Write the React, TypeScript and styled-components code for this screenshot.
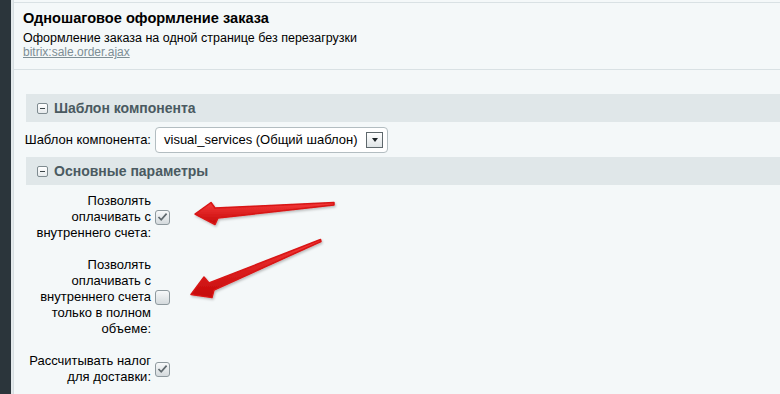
import React from "react";
import styled, { createGlobalStyle } from "styled-components";

const GlobalStyle = createGlobalStyle`
  html, body {
    margin: 0;
    padding: 0;
    background: #f4f8f9;
  }
  body {
    font-family: "Liberation Sans", Arial, sans-serif;
    color: #000;
  }
`;

type Field = {
  lines: string[];
  checked: boolean;
};

const fields: Field[] = [
  { lines: ["Позволять", "оплачивать с", "внутреннего счета:"], checked: true },
  {
    lines: ["Позволять", "оплачивать с", "внутреннего счета", "только в полном", "объеме:"],
    checked: false,
  },
  { lines: ["Рассчитывать налог", "для доставки:"], checked: true },
];

export default function App() {
  return (
    <Page>
      <GlobalStyle />
      <SideStrip />
      <Gutter />
      <Main>
        <Header>
          <Title>Одношаговое оформление заказа</Title>
          <Subtitle>Оформление заказа на одной странице без перезагрузки</Subtitle>
          <CodeLink href="#">bitrix:sale.order.ajax</CodeLink>
        </Header>

        <Body>
          <SectionBar>
            <Toggle />
            Шаблон компонента
          </SectionBar>
          <SelectRow>
            <Label $nowrap>Шаблон компонента:</Label>
            <Select>
              <SelectText>visual_services (Общий шаблон)</SelectText>
              <SelectButton>
                <Caret />
              </SelectButton>
            </Select>
          </SelectRow>

          <SectionBar>
            <Toggle />
            Основные параметры
          </SectionBar>
          {fields.map((f, i) => (
            <FieldRow key={i}>
              <Label>
                {f.lines.map((l, j) => (
                  <React.Fragment key={j}>
                    {l}
                    {j < f.lines.length - 1 && <br />}
                  </React.Fragment>
                ))}
              </Label>
              <CheckBox>
                {f.checked && (
                  <svg width="11" height="10" viewBox="0 0 11 10">
                    <path d="M1.5 5 L4.2 7.8 L9.6 1.6" fill="none" stroke="#5f696e" strokeWidth="1.7" />
                  </svg>
                )}
              </CheckBox>
            </FieldRow>
          ))}
        </Body>
      </Main>

      <Arrows width="780" height="394" viewBox="0 0 780 394">
        <defs>
          <linearGradient id="red" x1="0" y1="0" x2="0" y2="1">
            <stop offset="0" stopColor="#f43a3a" />
            <stop offset="1" stopColor="#c40808" />
          </linearGradient>
          <filter id="shade" x="-10%" y="-20%" width="120%" height="140%">
            <feDropShadow dx="1" dy="1.5" stdDeviation="1" floodColor="#000" floodOpacity="0.25" />
          </filter>
        </defs>
        <g fill="url(#red)" stroke="#d81414" strokeWidth="1.5" strokeLinejoin="round" filter="url(#shade)">
          <path d="M195 214 L211 202.5 L215 208 L334 202.5 L334 205 L218 218 L215 224.5 Z" />
          <path d="M191 294.5 L204 277 L209 283 L320.5 239.5 L321 241.5 L214 290 L212 297.5 Z" />
        </g>
      </Arrows>
    </Page>
  );
}

const Page = styled.div`
  position: relative;
  display: flex;
  width: 780px;
  height: 394px;
  overflow: hidden;
`;

const SideStrip = styled.div`
  width: 11px;
  flex-shrink: 0;
  background: #2b353b;
`;

const Gutter = styled.div`
  width: 2px;
  flex-shrink: 0;
  background: #e3e9eb;
`;

const Main = styled.div`
  flex: 1;
  border-left: 1px solid #d6dee1;
  background: #f4f8f9;
`;

const Header = styled.div`
  box-sizing: border-box;
  height: 68px;
  margin-top: 2px;
  padding: 6px 9px 0;
  border-top: 1px solid #d9e1e4;
  border-bottom: 1px solid #d9e1e4;
`;

const Title = styled.div`
  font-size: 14.6px;
  font-weight: bold;
  line-height: 18px;
  color: #000;
`;

const Subtitle = styled.div`
  margin-top: 4px;
  font-size: 12.5px;
  line-height: 14px;
  color: #000;
`;

const CodeLink = styled.a`
  display: block;
  font-size: 12px;
  line-height: 14px;
  color: #7d8e95;
  text-decoration: underline;
`;

const Body = styled.div`
  padding: 24px 0 0 12px;
`;

const SectionBar = styled.div`
  display: flex;
  align-items: center;
  gap: 6px;
  height: 28px;
  padding-left: 11px;
  background: #e0e7e9;
  font-size: 14px;
  font-weight: bold;
  color: #4a5a61;
`;

const Toggle = styled.span`
  position: relative;
  box-sizing: border-box;
  width: 11px;
  height: 11px;
  border: 1px solid #7f8b90;
  border-radius: 2px;
  background: linear-gradient(#ffffff, #e6eaec);

  &::after {
    content: "";
    position: absolute;
    left: 2px;
    right: 2px;
    top: 4px;
    height: 1px;
    background: #3c4649;
  }
`;

const Label = styled.div<{ $nowrap?: boolean }>`
  box-sizing: border-box;
  display: flex;
  justify-content: flex-end;
  width: 125px;
  flex-shrink: 0;
  text-align: right;
  white-space: ${(p) => (p.$nowrap ? "nowrap" : "normal")};
  font-size: 13px;
  line-height: 16px;
  color: #000;
`;

const SelectRow = styled.div`
  display: flex;
  align-items: center;
  gap: 4px;
  height: 35px;
`;

const Select = styled.div`
  box-sizing: border-box;
  display: flex;
  align-items: center;
  justify-content: space-between;
  width: 233px;
  height: 26px;
  padding: 0 4px 0 8px;
  border: 1px solid #b3bdc1;
  border-radius: 4px;
  background: #fff;
`;

const SelectText = styled.span`
  font-size: 13px;
  color: #000;
`;

const SelectButton = styled.span`
  box-sizing: border-box;
  display: flex;
  align-items: center;
  justify-content: center;
  width: 17px;
  height: 16px;
  border: 1px solid #5e686c;
  background: linear-gradient(#ffffff, #dfe4e6);
`;

const Caret = styled.span`
  width: 0;
  height: 0;
  border-left: 3.5px solid transparent;
  border-right: 3.5px solid transparent;
  border-top: 4px solid #1c2326;
`;

const FieldRow = styled.div`
  display: flex;
  align-items: center;
  gap: 4px;
  padding: 8px 0;
`;

const CheckBox = styled.span`
  box-sizing: border-box;
  display: flex;
  align-items: center;
  justify-content: center;
  width: 15px;
  height: 15px;
  border: 1px solid #8e999e;
  border-radius: 3px;
  background: linear-gradient(#f7f9fa, #d4dadd);
`;

const Arrows = styled.svg`
  position: absolute;
  left: 0;
  top: 0;
  pointer-events: none;
`;
